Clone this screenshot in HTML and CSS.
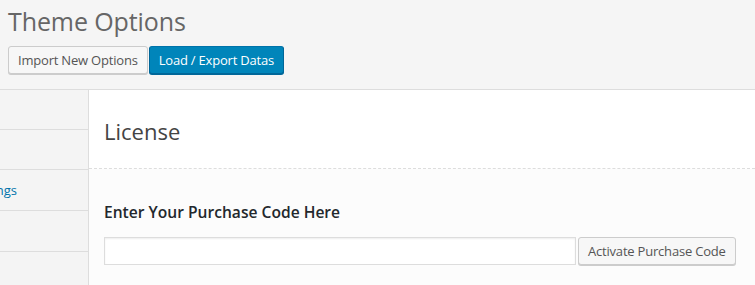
FILE: index.html
```html
<!DOCTYPE html>
<html lang="en">
<head>
    <meta charset="UTF-8">
    <meta name="viewport" content="width=device-width, initial-scale=1.0">
    <title>Theme Options</title>
    <link rel="stylesheet" href="styles.css">
</head>
<body>
    <div class="header">
        <h1>Theme Options</h1>
        <div class="tabs">
            <button class="btn">Import New Options</button>
            <button class="btn btn-primary">Load / Export Datas</button>
        </div>
    </div>

    <div class="panel">
        <div class="sidebar">
            <ul class="menu">
                <li>General</li>
                <li>Styling</li>
                <li><a href="#">Advanced Settings</a></li>
                <li>Footer</li>
                <li>License</li>
            </ul>
        </div>
        <div class="content">
            <div class="section-title">
                <h2>License</h2>
            </div>
            <div class="section-body">
                <h3>Enter Your Purchase Code Here</h3>
                <div class="code-row">
                    <input type="text" class="code-input">
                    <button class="btn">Activate Purchase Code</button>
                </div>
            </div>
        </div>
    </div>
</body>
</html>
```

FILE: styles.css
```css
body {
    margin: 0;
    font-family: "Open Sans", "Noto Sans", sans-serif;
    font-size: 13px;
    color: #444;
    background-color: #f5f5f5;
    overflow: hidden;
}
.header {
    padding: 5px 8px 15px 8px;
    border-bottom: 1px solid #ddd;
}
.header h1 {
    margin: 0;
    font-size: 25px;
    font-weight: 400;
    line-height: 33px;
    color: #666;
    letter-spacing: -0.1px;
}
.tabs {
    display: flex;
    gap: 1px;
    margin-top: 8px;
}
.btn {
    font-family: inherit;
    font-size: 13px;
    color: #555;
    background-color: #f7f7f7;
    border: 1px solid #ccc;
    border-radius: 3px;
    box-shadow: 0 1px 0 #ccc;
    height: 28px;
    padding: 0 9px;
    cursor: pointer;
    letter-spacing: -0.2px;
}
.btn-primary {
    background-color: #0085ba;
    border-color: #0073aa #006799 #006799;
    box-shadow: 0 1px 0 #006799;
    color: #fff;
}
.panel {
    display: flex;
    height: 200px;
}
.sidebar {
    width: 88px;
    border-right: 1px solid #ddd;
    overflow: hidden;
    background-color: #f4f4f4;
}
.menu {
    list-style: none;
    margin: 0 0 0 -112px;
    padding: 0;
    width: 200px;
}
.menu li {
    height: 39px;
    line-height: 41px;
    padding-left: 18px;
    border-bottom: 1px solid #ddd;
    color: #444;
}
.menu li:nth-child(n+3) {
    height: 40px;
}
.menu a {
    color: #0073aa;
    text-decoration: none;
}
.content {
    flex: 1;
    background-color: #fff;
}
.section-title {
    padding: 23px 15px 0 15px;
    height: 55px;
    border-bottom: 1px dashed #ddd;
}
.section-title h2 {
    margin: 0;
    font-size: 22px;
    font-weight: 400;
    line-height: 36px;
    color: #444;
}
.section-body {
    padding: 31px 15px 20px 15px;
    background-color: #fcfcfc;
    height: 200px;
}
.section-body h3 {
    margin: 0 0 13px 0;
    font-size: 15.6px;
    font-weight: 600;
    line-height: 24px;
    color: #23282d;
}
.code-row {
    display: flex;
    align-items: center;
    gap: 2px;
}
.code-input {
    width: 472px;
    height: 28px;
    box-sizing: border-box;
    border: 1px solid #ddd;
    background-color: #fff;
    box-shadow: inset 0 1px 2px rgba(0,0,0,0.07);
}
```
